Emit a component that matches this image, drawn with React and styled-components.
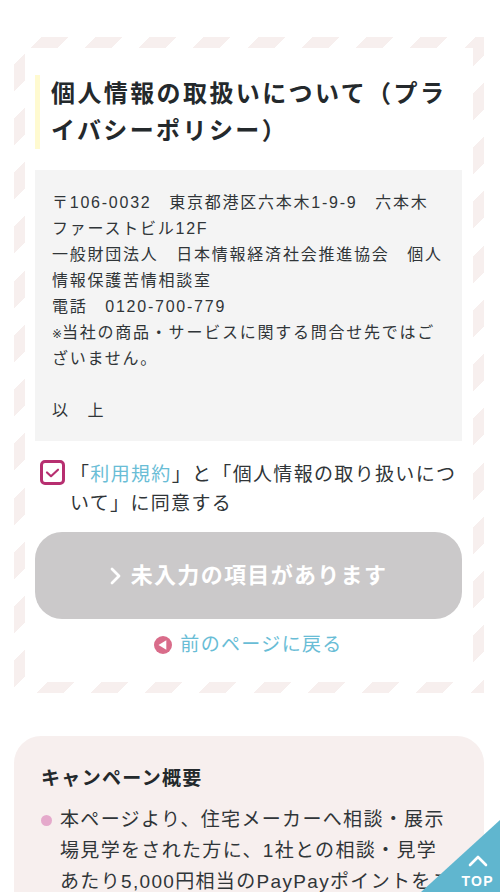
import React, { useState } from "react";
import styled, { createGlobalStyle } from "styled-components";

const GlobalStyles = createGlobalStyle`
  *, *::before, *::after {
    box-sizing: border-box;
  }

  html {
    scrollbar-width: none;
  }

  body {
    margin: 0;
    background-color: #fff;
    color: #303538;
    font-family: "Liberation Sans", "Noto Sans CJK JP", sans-serif;
    font-size: 19px;
    letter-spacing: 0.07em;
  }

  h1, h2, p, ul {
    margin: 0;
    padding: 0;
  }

  a {
    color: #69bdd6;
    text-decoration: none;
  }
`;

const Page = styled.main`
  display: flex;
  flex-direction: column;
  gap: 43px;
  padding: 37px 16px 0 14px;
`;

// Airmail-style striped frame around the form
const StripedFrame = styled.section`
  padding: 11px;
  background-image: repeating-linear-gradient(
    135deg,
    #fff 0 6.25%,
    #f7efee 6.25% 12.5%
  );
  background-size: 217px 217px;
`;

const FormArea = styled.form`
  display: flex;
  flex-direction: column;
  padding: 27px 11px 23px 10px;
  background-color: #fff;
`;

const Heading = styled.h1`
  padding-left: 11px;
  border-left: 5px solid #fffad0;
  color: #24292c;
  font-size: 24px;
  font-weight: 700;
  line-height: 37px;
  letter-spacing: 0.1em;
`;

const PolicyBox = styled.div`
  margin-top: 21px;
  padding: 20px 16px 17px 17px;
  background-color: #f4f4f4;
  font-size: 16px;
  line-height: 26px;
  letter-spacing: 0.11em;

  p {
    min-height: 26px;
  }
`;

const NoteMark = styled.span`
  font-family: "DejaVu Sans", sans-serif;
  font-size: 12px;
  line-height: 1;
  letter-spacing: 0;
`;

const AgreeRow = styled.div`
  display: flex;
  align-items: flex-start;
  gap: 5px;
  margin-top: 19px;
  padding-left: 5px;
  line-height: 29px;
`;

const CheckWrap = styled.span`
  display: grid;
  flex: none;

  > * {
    grid-area: 1 / 1;
  }

  svg {
    width: 25px;
    height: 25px;
    pointer-events: none;
  }
`;

const Checkbox = styled.input`
  appearance: none;
  width: 25px;
  height: 25px;
  margin: 0;
  border: 3px solid #b72f70;
  border-radius: 5px;
  background-color: #fff;
  cursor: pointer;
`;

const SubmitButton = styled.button`
  display: flex;
  align-items: center;
  justify-content: center;
  gap: 10px;
  margin-top: 14px;
  padding: 25px 16px;
  border: 0;
  border-radius: 27px;
  background-color: #cbc9ca;
  color: #fff;
  font-family: inherit;
  font-size: 22px;
  font-weight: 700;
  line-height: 37px;
  letter-spacing: 0.06em;
`;

const BackLink = styled.a`
  display: flex;
  align-items: center;
  align-self: center;
  gap: 8px;
  margin-top: 12px;
  line-height: 28px;
`;

const CampaignCard = styled.section`
  padding: 29px 27px 32px;
  border-radius: 27px 27px 0 0;
  background-color: #f7efee;
`;

const CampaignTitle = styled.h2`
  color: #24292c;
  font-size: 19px;
  font-weight: 700;
  line-height: 28px;
`;

const CampaignList = styled.ul`
  margin-top: 11px;
  list-style: none;
`;

const CampaignItem = styled.li`
  display: flex;
  gap: 8px;
  line-height: 31px;

  &::before {
    content: "";
    flex: none;
    width: 11px;
    height: 11px;
    margin-top: 11px;
    border-radius: 50%;
    background-color: #e5a9cb;
  }
`;

const TopLink = styled.a`
  position: fixed;
  right: 0;
  bottom: 0;
  display: flex;
  flex-direction: column;
  align-items: flex-end;
  justify-content: flex-end;
  gap: 6px;
  width: 79px;
  height: 72px;
  padding: 0 6px 3px 0;
  background-color: #60b6cf;
  clip-path: polygon(100% 0, 100% 100%, 0 100%);
  color: #fff;
  font-size: 14px;
  font-weight: 700;
  line-height: 16px;

  svg {
    margin-right: 6px;
  }
`;

const App = () => {
  const [agreed, setAgreed] = useState(true);

  return (
    <>
      <GlobalStyles />
      <Page id="top">
        <StripedFrame>
          <FormArea onSubmit={(event) => event.preventDefault()}>
            <Heading>個人情報の取扱いについて（プライバシーポリシー）</Heading>
            <PolicyBox>
              <p>〒106-0032　東京都港区六本木1-9-9　六本木ファーストビル12F</p>
              <p>一般財団法人　日本情報経済社会推進協会　個人情報保護苦情相談室</p>
              <p>電話　0120-700-779</p>
              <p>
                <NoteMark>※</NoteMark>
                当社の商品・サービスに関する問合せ先ではございません。
              </p>
              <p />
              <p>以　上</p>
            </PolicyBox>
            <AgreeRow>
              <CheckWrap>
                <Checkbox
                  type="checkbox"
                  id="agree"
                  checked={agreed}
                  onChange={(event) => setAgreed(event.target.checked)}
                />
                {agreed && (
                  <svg viewBox="0 0 25 25" fill="none" aria-hidden="true">
                    <path
                      d="M7 12.5 11 16.2 18 9.7"
                      stroke="#b72f70"
                      strokeWidth="2.2"
                      strokeLinecap="round"
                      strokeLinejoin="round"
                    />
                  </svg>
                )}
              </CheckWrap>
              <label htmlFor="agree">
                「<a href="#terms">利用規約</a>
                」と「個人情報の取り扱いについて」に同意する
              </label>
            </AgreeRow>
            <SubmitButton type="submit" disabled>
              <svg width="11" height="18" viewBox="0 0 11 18" fill="none" aria-hidden="true">
                <path
                  d="M2 2 9 9 2 16"
                  stroke="#fff"
                  strokeWidth="2.8"
                  strokeLinecap="round"
                  strokeLinejoin="round"
                />
              </svg>
              未入力の項目があります
            </SubmitButton>
            <BackLink href="#back">
              <svg width="18" height="18" viewBox="0 0 18 18" aria-hidden="true">
                <circle cx="9" cy="9" r="9" fill="#d96c8a" />
                <path d="M4.5 9 12.3 4.2V13.8Z" fill="#fff" />
              </svg>
              前のページに戻る
            </BackLink>
          </FormArea>
        </StripedFrame>
        <CampaignCard>
          <CampaignTitle>キャンペーン概要</CampaignTitle>
          <CampaignList>
            <CampaignItem>
              <p>
                本ページより、住宅メーカーへ相談・展示場見学をされた方に、1社との相談・見学あたり5,000円相当のPayPayポイントをご
              </p>
            </CampaignItem>
          </CampaignList>
        </CampaignCard>
      </Page>
      <TopLink href="#top">
        <svg width="20" height="12" viewBox="0 0 20 12" fill="none" aria-hidden="true">
          <path
            d="M2 10 10 2 18 10"
            stroke="#fff"
            strokeWidth="2.6"
            strokeLinecap="round"
            strokeLinejoin="round"
          />
        </svg>
        TOP
      </TopLink>
    </>
  );
};

export default App;
